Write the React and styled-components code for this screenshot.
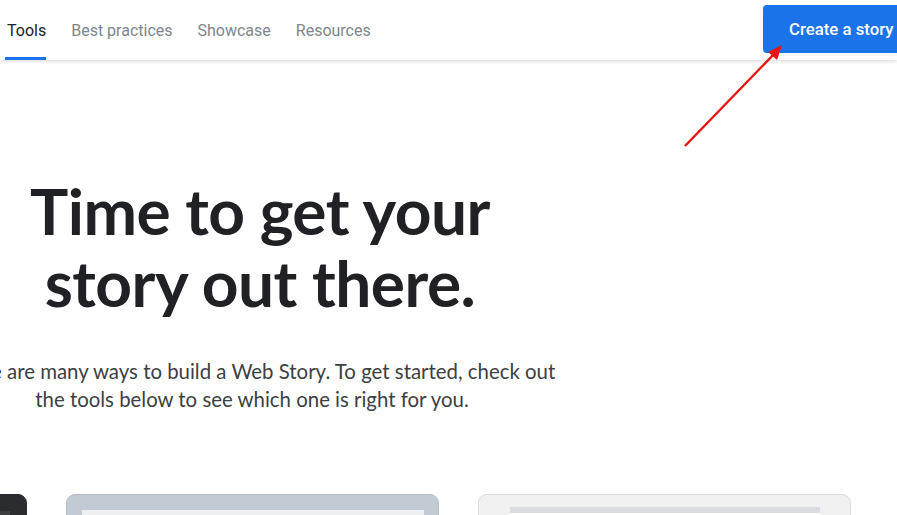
import React from "react";
import styled, { createGlobalStyle } from "styled-components";

const GlobalStyle = createGlobalStyle`
  html, body {
    margin: 0;
    padding: 0;
    background: #ffffff;
    overflow: hidden;
  }
  body {
    font-family: "Lato", "Open Sans", sans-serif;
    color: #202124;
  }
`;

const Page = styled.div`
  position: relative;
  width: 897px;
  height: 515px;
  overflow: hidden;
`;

const Header = styled.header`
  position: relative;
  z-index: 2;
  height: 60px;
  display: flex;
  align-items: flex-start;
  justify-content: space-between;
  background: #fff;
  box-shadow: 0 1px 4px rgba(60, 64, 67, 0.22);
`;

const Tabs = styled.nav`
  display: flex;
  gap: 25px;
  padding-left: 7px;
  height: 60px;
`;

const Tab = styled.a`
  position: relative;
  display: flex;
  align-items: center;
  height: 60px;
  font-family: "Roboto", sans-serif;
  font-size: 16px;
  color: ${(p) => (p.active ? "#202124" : "#80868b")};
  text-decoration: none;

  &::after {
    content: "";
    display: ${(p) => (p.active ? "block" : "none")};
    position: absolute;
    left: -2px;
    right: 0;
    bottom: 0;
    height: 3px;
    background: #1a73e8;
  }
`;

const CreateButton = styled.button`
  flex-shrink: 0;
  width: 160px;
  margin-top: 5px;
  margin-right: -26px;
  height: 48px;
  padding: 0 0 0 26px;
  text-align: left;
  border: none;
  border-radius: 4px;
  background: #1a73e8;
  color: #fff;
  font-family: "Roboto", sans-serif;
  font-size: 16.8px;
  font-weight: 500;
  white-space: nowrap;
`;

const Hero = styled.section`
  width: 620px;
  margin-left: -50px;
  padding-top: 115px;
  text-align: center;
`;

const Title = styled.h1`
  margin: 0;
  font-size: 64px;
  line-height: 72px;
  font-weight: 700;
  color: #202124;
  letter-spacing: -0.5px;
`;

const Lead = styled.p`
  margin: 38px 16px 0 0;
  font-size: 20.4px;
  line-height: 28px;
  color: #3c4043;
  white-space: nowrap;
`;

const Cards = styled.div`
  display: flex;
  gap: 39px;
  margin-left: -346px;
  margin-top: 81px;
`;

const Card = styled.div`
  flex-shrink: 0;
  width: 373px;
  height: 200px;
  box-sizing: border-box;
  border-radius: 9px;
  border: 1px solid ${(p) => p.border};
  background: ${(p) => p.bg};
  padding: ${(p) => p.pad};
`;

const Screen = styled.div`
  height: 120px;
  background: ${(p) => p.bg};
  border-top: 6px solid ${(p) => p.edge};
`;

const Arrow = styled.svg`
  position: absolute;
  left: 0;
  top: 0;
  pointer-events: none;
  z-index: 3;
`;

export default function App() {
  return (
    <Page>
      <GlobalStyle />
      <Header>
        <Tabs>
          <Tab active>Tools</Tab>
          <Tab>Best practices</Tab>
          <Tab>Showcase</Tab>
          <Tab>Resources</Tab>
        </Tabs>
        <CreateButton>Create a story</CreateButton>
      </Header>
      <Hero>
        <Title>
          Time to get your
          <br />
          story out there.
        </Title>
        <Lead>
          There are many ways to build a Web Story. To get started, check out
          <br />
          the tools below to see which one is right for you.
        </Lead>
      </Hero>
      <Cards>
        <Card bg="#2b2c2f" border="#2b2c2f" pad="16px 16px 0">
          <Screen bg="#202124" edge="#3c4043" />
        </Card>
        <Card bg="#c2cad3" border="#b5bec8" pad="15px 14px 0 15px">
          <Screen bg="#ffffff" edge="#eef0f2" />
        </Card>
        <Card bg="#f1f1f1" border="#dcdcdc" pad="12px 30px 0 31px">
          <Screen bg="#ffffff" edge="#dadce0" />
        </Card>
      </Cards>
      <Arrow width="897" height="515" viewBox="0 0 897 515">
        <line x1="685" y1="146" x2="775" y2="53" stroke="#ee1111" strokeWidth="2.4" />
        <polygon points="782,45 768,52 777,60" fill="#ee1111" />
      </Arrow>
    </Page>
  );
}
